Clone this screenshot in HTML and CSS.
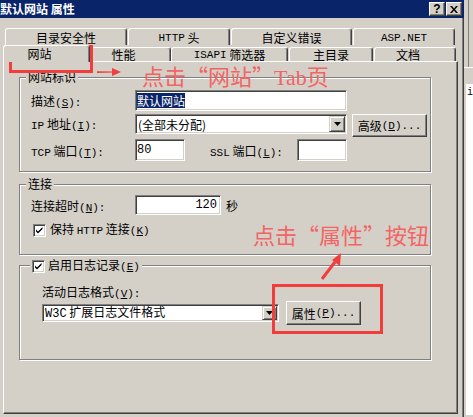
FILE: index.html
```html
<!DOCTYPE html>
<html lang="zh-CN">
<head>
<meta charset="utf-8">
<title>默认网站 属性</title>
<link rel="stylesheet" href="styles.css">
</head>
<body>
<div class="screen">
  <div class="window">
    <div class="titlebar">
      <span class="title">默认网站 属性</span>
      <div class="tbtns">
        <span class="tbtn q">?</span>
        <span class="tbtn"><svg width="8" height="7" viewBox="0 0 8 7"><path d="M0 0h2l2 2.5L6 0h2L5 3.5 8 7H6L4 4.5 2 7H0l3-3.5z" fill="#000"/></svg></span>
      </div>
    </div>
    <div class="body">
      <div class="tabrow row1">
        <div class="tab w122">目录安全性</div>
        <div class="tab w102"><span class="en">HTTP</span>&nbsp;头</div>
        <div class="tab w121">自定义错误</div>
        <div class="tab w102"><span class="en">ASP.NET</span></div>
      </div>
      <div class="tabrow row2">
        <div class="tab sel w87 lefty">网站</div>
        <div class="tab w81 lefty">性能</div>
        <div class="tab w117"><span class="en">ISAPI</span>&nbsp;筛选器</div>
        <div class="tab w84">主目录</div>
        <div class="tab w82 lefty">文档</div>
      </div>
      <div class="panel">
        <div class="group g1">
          <div class="legend">网站标识</div>
          <div class="frow">
            <span class="lbl">描述<span class="en">(<u>S</u>):</span></span>
            <div class="field wide h21"><span class="hl">默认网站</span></div>
          </div>
          <div class="frow r2">
            <span class="lbl"><span class="en">IP</span> 地址<span class="en">(<u>I</u>):</span></span>
            <div class="field combo wide h20"><span class="ctext">(全部未分配)</span><span class="ddbtn"><svg width="7" height="4" viewBox="0 0 7 4"><path d="M0 0h7L3.5 4z" fill="#000"/></svg></span></div>
            <button class="btn adv">高级<span class="en">(<u>D</u>)...</span></button>
          </div>
          <div class="frow r3">
            <span class="lbl"><span class="en">TCP</span> 端口<span class="en">(<u>T</u>):</span></span>
            <div class="field short h22"><span class="en big">80</span></div>
            <span class="ssl"><span class="en">SSL</span> 端口<span class="en">(<u>L</u>):</span></span>
            <div class="field short h22"></div>
          </div>
        </div>

        <div class="group g2">
          <div class="legend">连接</div>
          <div class="frow">
            <span class="lbl">连接超时<span class="en">(<u>N</u>):</span></span>
            <div class="field timeout h20"><span class="en big">120</span></div>
            <span class="sec">秒</span>
          </div>
          <div class="frow cbrow">
            <span class="cb"><svg width="13" height="13" viewBox="0 0 13 13"><path d="M3 5.5l2 2 4.5-4.5v2L5 9.5l-2-2z" fill="#000"/></svg></span>
            <span class="cbtext">保持 <span class="en">HTTP</span> 连接<span class="en">(<u>K</u>)</span></span>
          </div>
        </div>

        <div class="group g3">
          <div class="legend lg3">
            <span class="cb"><svg width="13" height="13" viewBox="0 0 13 13"><path d="M3 5.5l2 2 4.5-4.5v2L5 9.5l-2-2z" fill="#000"/></svg></span>
            <span class="cbtext">启用日志记录<span class="en">(<u>E</u>)</span></span>
          </div>
          <div class="g3label">活动日志格式<span class="en">(<u>V</u>):</span></div>
          <div class="frow">
            <div class="field combo logsel h18"><span class="ctext"><span class="en big">W3C</span> 扩展日志文件格式</span><span class="ddbtn small"><svg width="7" height="4" viewBox="0 0 7 4"><path d="M0 0h7L3.5 4z" fill="#000"/></svg></span></div>
            <button class="btn prop">属性<span class="en">(<u>P</u>)...</span></button>
          </div>
        </div>
      </div>
    </div>
  </div>
  <div class="strip">
    <div class="s-top"></div>
    <div class="s-line"></div>
    <div class="s-mid"></div>
    <div class="s-box"><span class="s-text">i</span></div>
  </div>

  <div class="redbox rb1"></div>
  <div class="redbox rb2"></div>
  <svg class="arrow a1" width="28" height="12" viewBox="0 0 28 12"><path d="M2 5.2L19 5.6 19 6.6 2 7z" fill="#f23d3d"/><path d="M17 2L26 6 17 10z" fill="#f23d3d"/></svg>
  <svg class="arrow a2" width="26" height="30" viewBox="0 0 26 30"><path d="M2 27L15 10" stroke="#f23d3d" stroke-width="3"/><path d="M21 1L20 14 12 8z" fill="#f23d3d"/></svg>
  <div class="note n1">点击“网站”<span class="latin">Tab</span>页</div>
  <div class="note n2">点击“属性”按钮</div>
</div>
</body>
</html>
```

FILE: styles.css
```css
body {
  margin: 0;
  background: #d4d0c8;
  font-family: "Noto Sans CJK SC", sans-serif;
  font-size: 12px;
  color: #000;
}
.screen {
  position: relative;
  width: 473px;
  height: 417px;
  display: flex;
  overflow: hidden;
}
.window {
  width: 464px;
  display: flex;
  flex-direction: column;
}
.en {
  font-family: "Liberation Mono", monospace;
  font-size: 11px;
}
.en.big { font-size: 12px; }
u { text-decoration-thickness: 1px; text-underline-offset: 1px; }

/* title bar */
.titlebar {
  height: 18px;
  background: #0a246a;
  display: flex;
  align-items: center;
  justify-content: space-between;
  padding-right: 2px;
}
.title {
  color: #fff;
  font-weight: bold;
  margin-left: 0;
  line-height: 18px;
}
.tbtns { display: flex; gap: 1px; }
.tbtn {
  width: 16px;
  height: 14px;
  box-sizing: border-box;
  background: #d4d0c8;
  border: 1px solid;
  border-color: #fff #404040 #404040 #fff;
  box-shadow: inset -1px -1px #808080;
  display: flex;
  align-items: center;
  justify-content: center;
}
.tbtn.q {
  font: bold 12px "Liberation Sans", sans-serif;
  line-height: 12px;
}

/* dialog body */
.body {
  flex: 1;
  padding: 10px 0 0 3px;
  border-right: 1px solid #404040;
  box-shadow: inset -1px 0 #808080;
}
.tabrow { display: flex; }
.row1 { margin-left: 2px; height: 17px; gap: 1px; }
.row2 { height: 16px; align-items: flex-start; }
.tab {
  box-sizing: border-box;
  border: 1px solid;
  border-bottom: none;
  border-color: #fff #404040 #404040 #fff;
  box-shadow: inset -1px 0 #808080;
  border-radius: 3px 3px 0 0;
  display: flex;
  align-items: center;
  justify-content: center;
  background: #d4d0c8;
  white-space: nowrap;
  line-height: 14px;
}
.row1 .tab { height: 17px; padding-top: 1px; }
.row2 .tab { height: 14px; margin-top: 2px; }
.row2 .tab.sel {
  height: 17px;
  margin-top: 0;
  position: relative;
  z-index: 2;
  padding-bottom: 1px;
}
.row2 .w117 { margin-right: 1px; }
.row2 .w84 { margin-right: 1px; }
.lefty { padding-right: 14px; }
.w122 { width: 122px; }
.w102 { width: 102px; }
.w121 { width: 121px; }
.w87 { width: 87px; }
.w81 { width: 81px; }
.w117 { width: 117px; }
.w84 { width: 84px; }
.w82 { width: 82px; }

.panel {
  position: relative;
  width: 455px;
  height: 353px;
  box-sizing: border-box;
  border: 1px solid;
  border-color: #fff #404040 #404040 #fff;
  box-shadow: inset -1px -1px #808080;
  padding: 15px 0 0 15px;
}

/* group boxes */
.group {
  position: relative;
  width: 412px;
  box-sizing: border-box;
  border: 1px solid #808080;
  box-shadow: 1px 1px 0 #fff, inset 1px 1px 0 #fff;
}
.legend {
  position: absolute;
  top: -8px;
  left: 6px;
  padding: 0 2px;
  background: #d4d0c8;
  line-height: 14px;
}
.g1 { padding: 12px 0 10px 11px; }
.g2 { padding: 10px 0 16px 11px; margin-top: 12px; }
.g3 { padding: 19px 0 34px 22px; margin-top: 10px; }

.frow { display: flex; align-items: center; }
.r2 { margin-top: 3px; align-items: flex-start; }
.r2 .lbl { line-height: 20px; }
.r3 { margin-top: 2px; }
.lbl { width: 104px; white-space: nowrap; }
.field {
  box-sizing: border-box;
  background: #fff;
  border: 1px solid;
  border-color: #808080 #fff #fff #808080;
  box-shadow: inset 1px 1px #404040, inset -1px -1px #d4d0c8;
  padding: 0 1px;
  display: flex;
  align-items: center;
  white-space: nowrap;
}
.h18 { height: 18px; }
.h20 { height: 20px; }
.h21 { height: 21px; }
.h22 { height: 22px; }
.wide { width: 212px; }
.short { width: 50px; }
.timeout { width: 86px; justify-content: flex-end; padding-right: 3px; }
.sec { margin-left: 5px; }
.ssl { margin-left: 25px; width: 87px; white-space: nowrap; }
.hl {
  background: #0a246a;
  color: #fff;
  line-height: 15px;
}
.combo { position: relative; justify-content: space-between; padding: 0 1px 0 2px; }
.ddbtn {
  width: 16px;
  height: 16px;
  box-sizing: border-box;
  background: #d4d0c8;
  border: 1px solid;
  border-color: #d4d0c8 #404040 #404040 #d4d0c8;
  box-shadow: inset 1px 1px #fff, inset -1px -1px #808080;
  display: flex;
  align-items: center;
  justify-content: center;
}
.ddbtn.small { height: 14px; width: 15px; }
.btn {
  box-sizing: border-box;
  background: #d4d0c8;
  border: 1px solid;
  border-color: #fff #404040 #404040 #fff;
  box-shadow: inset -1px -1px #808080;
  font: inherit;
  color: #000;
  padding: 0;
  display: flex;
  align-items: center;
  justify-content: center;
  white-space: nowrap;
}
.adv { width: 75px; height: 23px; margin-left: 5px; }
.prop { width: 75px; height: 24px; margin-left: 7px; }

.cbrow { margin-top: 7px; }
.cb {
  width: 13px;
  height: 13px;
  box-sizing: border-box;
  background: #fff;
  border: 1px solid;
  border-color: #808080 #fff #fff #808080;
  box-shadow: inset 1px 1px #404040, inset -1px -1px #d4d0c8;
  margin-left: 2px;
  display: block;
  position: relative;
}
.cb svg { position: absolute; left: -1px; top: -1px; }
.cbtext { margin-left: 4px; line-height: 14px; }
.lg3 { left: 10px; display: flex; align-items: center; }
.lg3 .cb { margin-left: 0; }
.lg3 .cbtext { margin-left: 3px; }
.g3label { line-height: 14px; }
.logsel { width: 237px; }
.logsel .ctext { line-height: 14px; }

/* right strip (background window) */
.strip {
  flex: 1;
  display: flex;
  flex-direction: column;
  background: #d4d0c8;
}
.s-top { height: 67px; margin-left: 4px; border-left: 1px solid #808080; }
.s-line { height: 1px; background: #fff; }
.s-mid { height: 16px; }
.s-box {
  height: 328px;
  background: #fff;
  margin-left: 2px;
  font-family: "Liberation Mono", monospace;
  font-size: 10px;
  line-height: 12px;
  padding: 3px 0 0 1px;
  overflow: hidden;
}

/* annotations */
.redbox {
  position: absolute;
  border: 3px solid #f23d3d;
  box-sizing: border-box;
}
.rb1 { left: 9px; top: 45px; width: 84px; height: 28px; }
.rb2 { left: 272px; top: 284px; width: 111px; height: 50px; }
.arrow { position: absolute; }
.a1 { left: 95px; top: 66px; }
.a2 { left: 320px; top: 252px; }
.note {
  position: absolute;
  color: #f36464;
  font-size: 22px;
  line-height: 24px;
  white-space: nowrap;
}
.latin { font-family: "Liberation Serif", serif; }
.n1 { left: 142px; top: 63px; }
.n2 { left: 253px; top: 222px; }
```
